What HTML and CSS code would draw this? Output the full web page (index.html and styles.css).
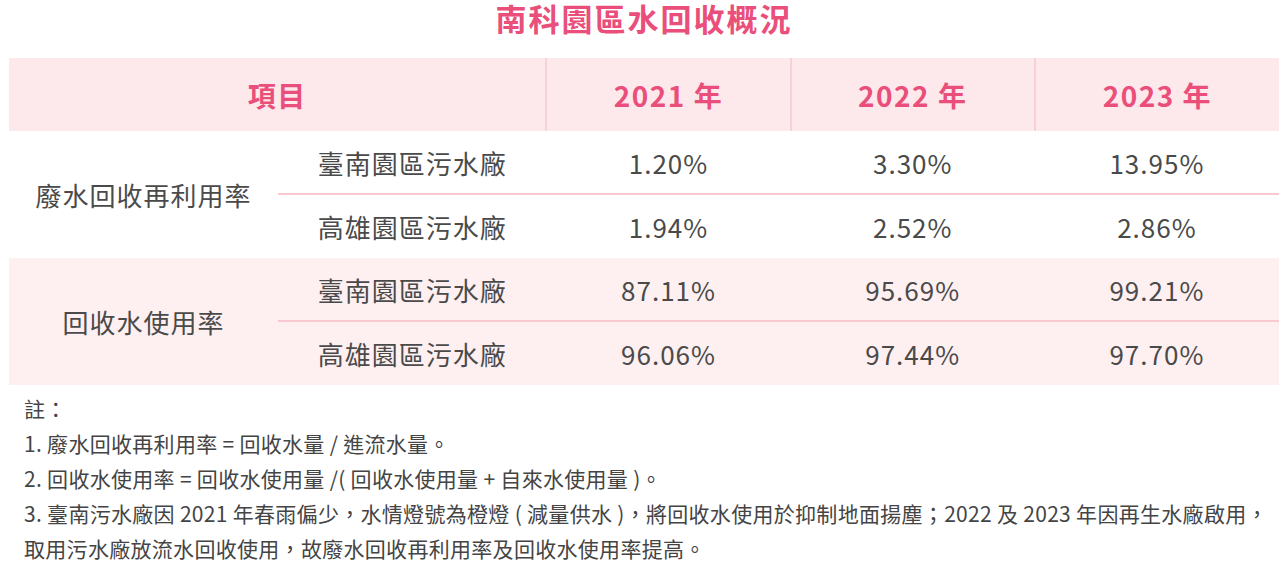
FILE: index.html
```html
<!DOCTYPE html>
<html lang="zh-Hant">
<head>
<meta charset="utf-8">
<title>南科園區水回收概況</title>
<link rel="stylesheet" href="styles.css">
</head>
<body>
<div class="wrap">
  <h1 class="title">南科園區水回收概況</h1>
  <table class="data">
    <colgroup>
      <col class="c-label"><col class="c-plant"><col class="c-year"><col class="c-year"><col class="c-year">
    </colgroup>
    <thead>
      <tr>
        <th colspan="2">項目</th>
        <th>2021 年</th>
        <th>2022 年</th>
        <th>2023 年</th>
      </tr>
    </thead>
    <tbody class="grp">
      <tr class="first">
        <td rowspan="2" class="label">廢水回收再利用率</td>
        <td>臺南園區污水廠</td><td>1.20%</td><td>3.30%</td><td>13.95%</td>
      </tr>
      <tr class="second">
        <td>高雄園區污水廠</td><td>1.94%</td><td>2.52%</td><td>2.86%</td>
      </tr>
    </tbody>
    <tbody class="grp alt">
      <tr class="first">
        <td rowspan="2" class="label">回收水使用率</td>
        <td>臺南園區污水廠</td><td>87.11%</td><td>95.69%</td><td>99.21%</td>
      </tr>
      <tr class="second">
        <td>高雄園區污水廠</td><td>96.06%</td><td>97.44%</td><td>97.70%</td>
      </tr>
    </tbody>
  </table>
  <div class="notes">
    <p>註：</p>
    <p>1. 廢水回收再利用率 = 回收水量 / 進流水量。</p>
    <p>2. 回收水使用率 = 回收水使用量 /( 回收水使用量 + 自來水使用量 )。</p>
    <p>3. 臺南污水廠因 2021 年春雨偏少，水情燈號為橙燈 ( 減量供水 )，將回收水使用於抑制地面揚塵；2022 及 2023 年因再生水廠啟用，取用污水廠放流水回收使用，故廢水回收再利用率及回收水使用率提高。</p>
  </div>
</div>
</body>
</html>
```

FILE: styles.css
```css
html, body {
  margin: 0;
  padding: 0;
  background: #ffffff;
}
body {
  font-family: "Noto Sans CJK TC", "Noto Sans", sans-serif;
  color: #4a4a4a;
}
.wrap {
  width: 1270px;
  margin-left: 9px;
}
.title {
  margin: 0;
  height: 58px;
  line-height: 36px;
  text-align: center;
  font-size: 31px;
  font-weight: 700;
  letter-spacing: 2px;
  color: #ea4f7b;
}
.data {
  width: 1270px;
  border-collapse: collapse;
  table-layout: fixed;
}
.c-label { width: 269px; }
.c-plant { width: 268px; }
.c-year { width: 244px; }
.data th {
  height: 73px;
  padding: 0;
  background: #fde8eb;
  color: #ea4f7b;
  font-size: 28px;
  font-weight: 700;
  letter-spacing: 1.5px;
  text-align: center;
  border-left: 2px solid #f9d0d8;
}
.data th:first-child { border-left: none; }
.data td {
  height: 62px;
  padding: 0;
  text-align: center;
  font-size: 26px;
  letter-spacing: 1px;
  color: #4a4a4a;
}
.data tr.second td { height: 63px; }
.data tbody tr.first td:not(.label) {
  border-bottom: 2px solid #f9c9d2;
}
.grp.alt td { background: #fef0f1; }
.notes {
  padding: 6px 0 0 15px;
  margin-right: -5px;
  font-size: 21px;
  color: #444;
}
.notes p {
  margin: 0;
  line-height: 35px;
  letter-spacing: 0.3px;
}
```
